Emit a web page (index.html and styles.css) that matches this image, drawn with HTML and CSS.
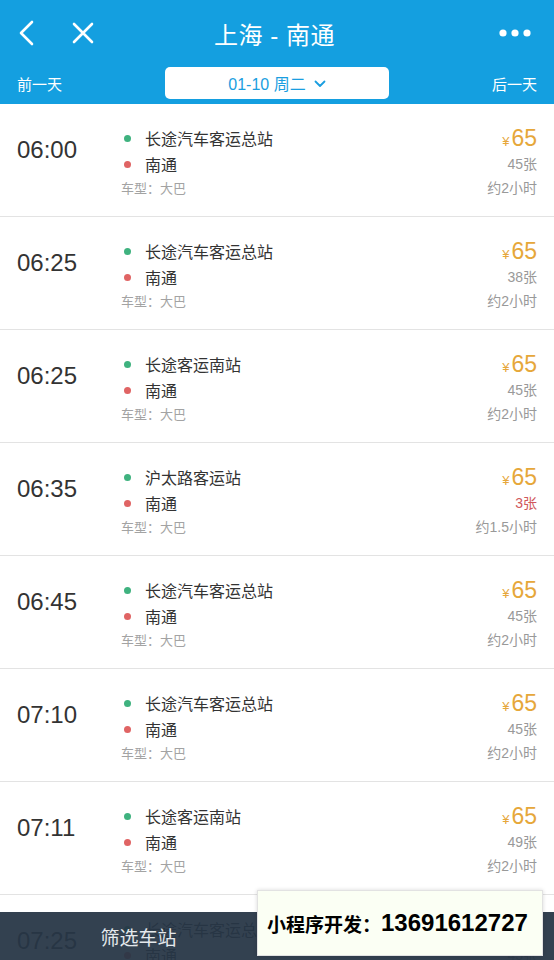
FILE: index.html
```html
<!DOCTYPE html>
<html lang="zh">
<head>
<meta charset="utf-8">
<link rel="stylesheet" href="styles.css">
</head>
<body>
<div class="page">
  <header class="header">
    <div class="topbar">
      <div class="nav-left">
        <svg class="ico" width="24" height="26" viewBox="0 0 24 26"><polyline points="14,2 3,13 14,24" fill="none" stroke="#fff" stroke-width="2.6" stroke-linecap="round" stroke-linejoin="round"/></svg>
        <svg class="ico close" width="24" height="24" viewBox="0 0 24 24"><path d="M3 3 L21 21 M21 3 L3 21" stroke="#fff" stroke-width="2.6" stroke-linecap="round"/></svg>
      </div>
      <div class="title">上海 - 南通</div>
      <svg class="more" width="32" height="10" viewBox="0 0 32 10"><circle cx="4" cy="5" r="3.6" fill="#fff"/><circle cx="16" cy="5" r="3.6" fill="#fff"/><circle cx="28" cy="5" r="3.6" fill="#fff"/></svg>
    </div>
    <div class="datebar">
      <span class="day">前一天</span>
      <div class="pill">01-10 周二 <svg width="12" height="8" viewBox="0 0 12 8"><polyline points="1.5,1.5 6,6 10.5,1.5" fill="none" stroke="#1a9ee0" stroke-width="1.8" stroke-linecap="round" stroke-linejoin="round"/></svg></div>
      <span class="day">后一天</span>
    </div>
  </header>

  <main class="list">
    <div class="row">
      <div class="time">06:00</div>
      <div class="route"><div class="stop"><i class="dot from"></i>长途汽车客运总站</div><div class="stop"><i class="dot to"></i>南通</div><div class="type">车型：大巴</div></div>
      <div class="info"><div class="price"><span class="yen">¥</span>65</div><div class="seats">45张</div><div class="dur">约2小时</div></div>
    </div>
    <div class="row">
      <div class="time">06:25</div>
      <div class="route"><div class="stop"><i class="dot from"></i>长途汽车客运总站</div><div class="stop"><i class="dot to"></i>南通</div><div class="type">车型：大巴</div></div>
      <div class="info"><div class="price"><span class="yen">¥</span>65</div><div class="seats">38张</div><div class="dur">约2小时</div></div>
    </div>
    <div class="row">
      <div class="time">06:25</div>
      <div class="route"><div class="stop"><i class="dot from"></i>长途客运南站</div><div class="stop"><i class="dot to"></i>南通</div><div class="type">车型：大巴</div></div>
      <div class="info"><div class="price"><span class="yen">¥</span>65</div><div class="seats">45张</div><div class="dur">约2小时</div></div>
    </div>
    <div class="row">
      <div class="time">06:35</div>
      <div class="route"><div class="stop"><i class="dot from"></i>沪太路客运站</div><div class="stop"><i class="dot to"></i>南通</div><div class="type">车型：大巴</div></div>
      <div class="info"><div class="price"><span class="yen">¥</span>65</div><div class="seats few">3张</div><div class="dur">约1.5小时</div></div>
    </div>
    <div class="row">
      <div class="time">06:45</div>
      <div class="route"><div class="stop"><i class="dot from"></i>长途汽车客运总站</div><div class="stop"><i class="dot to"></i>南通</div><div class="type">车型：大巴</div></div>
      <div class="info"><div class="price"><span class="yen">¥</span>65</div><div class="seats">45张</div><div class="dur">约2小时</div></div>
    </div>
    <div class="row">
      <div class="time">07:10</div>
      <div class="route"><div class="stop"><i class="dot from"></i>长途汽车客运总站</div><div class="stop"><i class="dot to"></i>南通</div><div class="type">车型：大巴</div></div>
      <div class="info"><div class="price"><span class="yen">¥</span>65</div><div class="seats">45张</div><div class="dur">约2小时</div></div>
    </div>
    <div class="row">
      <div class="time">07:11</div>
      <div class="route"><div class="stop"><i class="dot from"></i>长途客运南站</div><div class="stop"><i class="dot to"></i>南通</div><div class="type">车型：大巴</div></div>
      <div class="info"><div class="price"><span class="yen">¥</span>65</div><div class="seats">49张</div><div class="dur">约2小时</div></div>
    </div>
    <div class="row">
      <div class="time">07:25</div>
      <div class="route"><div class="stop"><i class="dot from"></i>长途汽车客运总站</div><div class="stop"><i class="dot to"></i>南通</div><div class="type">车型：大巴</div></div>
      <div class="info"><div class="price"><span class="yen">¥</span>65</div><div class="seats">45张</div><div class="dur">约2小时</div></div>
    </div>
  </main>

  <div class="bottombar">
    <div class="filter">筛选车站</div>
    <div class="filter"></div>
  </div>
  <div class="promo">小程序开发：<span class="phone">13691612727</span></div>
</div>
</body>
</html>
```

FILE: styles.css
```css
* { box-sizing: border-box; }
html, body { margin: 0; padding: 0; }
body {
  font-family: "Liberation Sans", "Noto Sans CJK SC", sans-serif;
  background: #f5f5f5;
  color: #333;
}
.page {
  width: 554px;
  height: 960px;
  overflow: hidden;
  position: relative;
}
.header {
  background: #149fe0;
  color: #fff;
  height: 104px;
}
.topbar {
  height: 66px;
  display: flex;
  align-items: center;
  justify-content: space-between;
  padding: 0 23px 0 18px;
  position: relative;
}
.nav-left {
  display: flex;
  align-items: center;
  gap: 29px;
  width: 100px;
}
.ico { display: block; }
.title {
  font-size: 24px;
  letter-spacing: 0.5px;
  flex: 1;
  text-align: center;
  margin-right: 68px;
}
.more { display: block; }
.datebar {
  height: 38px;
  display: flex;
  align-items: center;
  justify-content: space-between;
  padding: 0 17px 4px 17px;
}
.day { font-size: 15px; width: 80px; }
.day:last-child { text-align: right; }
.pill {
  width: 224px;
  height: 32px;
  background: #fff;
  border-radius: 5px;
  color: #1a9ee0;
  font-size: 16px;
  display: flex;
  align-items: center;
  justify-content: center;
  gap: 4px;
  margin-left: 68px;
  margin-right: 68px;
}
.pill svg { margin-left: 4px; margin-top: 1px; }
.list { background: #f5f5f5; }
.row {
  height: 113px;
  background: #fff;
  border-bottom: 1px solid #e3e3e3;
  display: flex;
  padding: 21px 17px 0 17px;
}
.time {
  width: 104px;
  font-size: 24px;
  line-height: 50px;
  color: #333;
}
.route { flex: 1; }
.stop {
  display: flex;
  align-items: center;
  height: 26px;
  font-size: 16px;
  color: #333;
}
.dot {
  width: 7px;
  height: 7px;
  border-radius: 50%;
  margin: 0 14px 0 3px;
}
.dot.from { background: #3fb27f; }
.dot.to { background: #e06464; }
.type {
  height: 23px;
  line-height: 23px;
  font-size: 13px;
  color: #a3a3a3;
}
.info { text-align: right; }
.price {
  height: 26px;
  line-height: 26px;
  font-size: 23px;
  color: #e6a73a;
}
.yen { font-size: 13px; margin-right: 2px; }
.seats {
  height: 26px;
  line-height: 26px;
  font-size: 14px;
  color: #999;
}
.seats.few { color: #d0585c; }
.dur {
  height: 23px;
  line-height: 23px;
  font-size: 14px;
  color: #999;
}
.bottombar {
  position: absolute;
  left: 0;
  right: 0;
  bottom: 0;
  height: 48px;
  background: rgba(38, 53, 69, 0.94);
  display: flex;
}
.filter {
  flex: 1;
  display: flex;
  align-items: center;
  justify-content: center;
  color: #e4e8ec;
  font-size: 19px;
}
.promo {
  position: absolute;
  left: 257px;
  top: 890px;
  width: 286px;
  height: 66px;
  background: #fbfff4;
  border: 1px solid #e2e2e2;
  box-shadow: 0 0 4px rgba(0,0,0,0.15);
  display: flex;
  align-items: center;
  padding-left: 9px;
  font-weight: bold;
  font-size: 19px;
  color: #000;
}
.phone { font-size: 24px; }
```
